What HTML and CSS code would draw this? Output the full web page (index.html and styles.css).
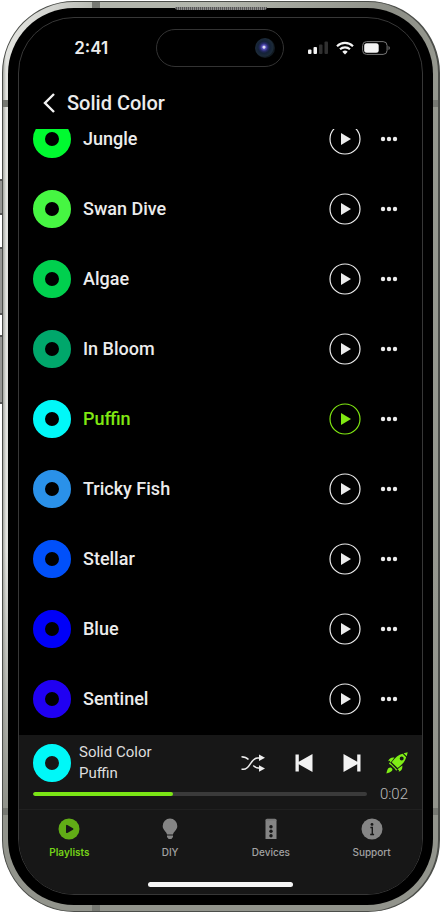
FILE: index.html
```html
<!DOCTYPE html>
<html lang="en">
<head>
<meta charset="utf-8">
<meta name="viewport" content="width=device-width, initial-scale=1">
<title>Solid Color</title>
<link rel="stylesheet" href="styles.css">
</head>
<body>
<svg class="symbols" aria-hidden="true">
  <symbol id="play" viewBox="0 0 32 32"><circle cx="16" cy="16" r="15" fill="none" stroke="currentColor" stroke-width="1.2"/><path d="M12 10v12l10-6z" fill="currentColor"/></symbol>
  <symbol id="dots" viewBox="0 0 18 6"><g fill="currentColor"><circle cx="3" cy="3" r="2.2"/><circle cx="9" cy="3" r="2.2"/><circle cx="15" cy="3" r="2.2"/></g></symbol>
</svg>
<div class="phone">
  <i class="side-key key-action"></i><i class="side-key key-up"></i><i class="side-key key-down"></i>
  <i class="seam seam-top"></i><i class="seam seam-left"></i><i class="seam seam-right"></i>
  <i class="seam seam-low-left"></i><i class="seam seam-low-right"></i><i class="seam seam-bottom"></i>
  <div class="bezel">
    <i class="earpiece"></i>
    <main class="screen">
      <div class="status">
        <span class="clock">2:41</span>
        <span class="island"><i class="lens"></i></span>
        <span class="signals">
          <svg width="20" height="14" viewBox="0 0 20 14"><g fill="#f4f4f4"><rect x="0" y="8.500" width="3.500" height="4.500" rx="1"/><rect x="5.500" y="6" width="3.500" height="7" rx="1"/></g><g fill="#303030"><rect x="11" y="3.500" width="3.500" height="9.500" rx="1"/><rect x="16.500" y="0.500" width="3.500" height="12.500" rx="1"/></g></svg>
          <svg width="18" height="14" viewBox="0 0 18 14" fill="none" stroke="#f4f4f4" stroke-width="2.200"><path d="M1 5.200a11.500 11.500 0 0 1 16 0M4 8.300a7.200 7.200 0 0 1 10 0"/><path d="M6.300 10.700a3.900 3.900 0 0 1 5.400 0L9 13.400z" fill="#f4f4f4" stroke="none"/></svg>
          <svg width="28" height="14" viewBox="0 0 28 14"><rect x="0.600" y="0.600" width="24.500" height="12.800" rx="4" fill="none" stroke="#777"/><rect x="2.200" y="2.200" width="14.500" height="9.600" rx="2.500" fill="#f4f4f4"/><path d="M26.500 5v4q1.300-.5 1.300-2t-1.300-2" fill="#777"/></svg>
        </span>
      </div>
      <header class="title-bar">
        <button class="back" aria-label="Back"><svg width="12" height="20" viewBox="0 0 12 20" fill="none" stroke="#f2f2f2" stroke-width="2.400"><path d="M11 1L2 10l9 9"/></svg></button>
        <h1>Solid Color</h1>
      </header>
      <div class="list-window">
        <ul class="tracks">
          <li><i class="disc jungle"></i><span>Jungle</span><button class="play" aria-label="Play Jungle"><svg><use href="#play"/></svg></button><button class="more" aria-label="More for Jungle"><svg><use href="#dots"/></svg></button></li>
          <li><i class="disc swan"></i><span>Swan Dive</span><button class="play" aria-label="Play Swan Dive"><svg><use href="#play"/></svg></button><button class="more" aria-label="More for Swan Dive"><svg><use href="#dots"/></svg></button></li>
          <li><i class="disc algae"></i><span>Algae</span><button class="play" aria-label="Play Algae"><svg><use href="#play"/></svg></button><button class="more" aria-label="More for Algae"><svg><use href="#dots"/></svg></button></li>
          <li><i class="disc bloom"></i><span>In Bloom</span><button class="play" aria-label="Play In Bloom"><svg><use href="#play"/></svg></button><button class="more" aria-label="More for In Bloom"><svg><use href="#dots"/></svg></button></li>
          <li class="current"><i class="disc puffin"></i><span>Puffin</span><button class="play" aria-label="Play Puffin"><svg><use href="#play"/></svg></button><button class="more" aria-label="More for Puffin"><svg><use href="#dots"/></svg></button></li>
          <li><i class="disc tricky"></i><span>Tricky Fish</span><button class="play" aria-label="Play Tricky Fish"><svg><use href="#play"/></svg></button><button class="more" aria-label="More for Tricky Fish"><svg><use href="#dots"/></svg></button></li>
          <li><i class="disc stellar"></i><span>Stellar</span><button class="play" aria-label="Play Stellar"><svg><use href="#play"/></svg></button><button class="more" aria-label="More for Stellar"><svg><use href="#dots"/></svg></button></li>
          <li><i class="disc blue"></i><span>Blue</span><button class="play" aria-label="Play Blue"><svg><use href="#play"/></svg></button><button class="more" aria-label="More for Blue"><svg><use href="#dots"/></svg></button></li>
          <li><i class="disc sentinel"></i><span>Sentinel</span><button class="play" aria-label="Play Sentinel"><svg><use href="#play"/></svg></button><button class="more" aria-label="More for Sentinel"><svg><use href="#dots"/></svg></button></li>
        </ul>
      </div>
      <section class="player" aria-label="Now playing">
        <div class="now">
          <i class="disc puffin"></i>
          <div class="now-text"><span>Solid Color</span><span>Puffin</span></div>
          <div class="controls">
            <button aria-label="Shuffle"><svg width="24" height="18" viewBox="0 0 24 18"><g fill="none" stroke="#eee" stroke-width="1.500"><path d="M0.500 15.300h2C9.500 15.300 9.500 4 16.500 4H19M0.500 2.700C4 2.700 5.500 3.300 7.500 5.500M12.300 11.500C14 13.500 15.500 14.200 19 14.200"/></g><path d="M18 .5l6 3.300-6 3.200zM18 11.200l6 3.300-6 3.200z" fill="#eee"/></svg></button>
            <button aria-label="Previous"><svg width="18" height="18" viewBox="0 0 18 18" fill="#f2f2f2"><path d="M0.500 0.500h3.300v7.300L17.500 0v18L3.800 10.200v7.300H.5z"/></svg></button>
            <button aria-label="Next"><svg width="18" height="18" viewBox="0 0 18 18" fill="#f2f2f2"><path d="M17.500 0.500h-3.300v7.300L.5 0v18l13.700-7.800v7.300h3.300z"/></svg></button>
            <button aria-label="Boost"><svg width="22" height="22" viewBox="0 0 22 22" fill="#7fee16"><path fill-rule="evenodd" d="M16.600 1.700 20.100 5.200C19.300 9 16.500 12.400 11.600 16L5.700 10.200C9.300 5.100 12.500 2.500 16.600 1.700ZM15.700 4.600a2 2 0 1 0 0 4 2 2 0 0 0 0-4Z"/><path d="M17.600 1.200 21.700.3 20.700 4.300ZM8.400 5.600 6.300 8.500 4.600 10.500 3.700 8.800 2.200 9.200C3.300 6.400 5.200 5.200 8.400 5.600ZM16.300 13.500C16.700 16.700 15.500 18.700 12.700 19.700L13 18.200 11.400 17.200 13.700 15.500ZM3.800 10.200 11.200 17.700 10.200 18.700Q8.700 16.100 6.900 15.100 5.600 13.200 3 11.700ZM4.800 15.500C6.500 16.600 7 17.700 5.800 19 4.500 20.300 2.700 20.700.4 21.500 1 19.400 1.200 17.400 2.600 16.100Q3.600 15.200 4.800 15.500Z"/></svg></button>
          </div>
        </div>
        <div class="timeline"><progress aria-label="Track progress" value="42" max="100"></progress><time>0:02</time></div>
      </section>
      <nav class="tabs">
        <a class="active" href="#playlists"><svg width="22" height="22" viewBox="0 0 22 22"><circle cx="11" cy="11" r="10.500" fill="#61ad16"/><path d="M8.900 7.800v6.400l5.600-3.200z" fill="#171717" stroke="#171717" stroke-width="1.800" stroke-linejoin="round"/></svg><span>Playlists</span></a>
        <a href="#diy"><svg width="22" height="22" viewBox="0 0 22 22" fill="#858585"><path d="M11 .5a7.300 7.300 0 0 0-7.300 7.400c0 4.100 3.500 5 4.300 8.600h6c.8-3.600 4.300-4.500 4.300-8.600A7.300 7.300 0 0 0 11 .5ZM8 17.500h6V19l-1.600 2H9.600L8 19Z"/></svg><span>DIY</span></a>
        <a href="#devices"><svg width="22" height="22" viewBox="0 0 22 22"><path d="M7 .8h8q1.500 0 1.500 1.500V21h-11V2.300Q5.500.8 7 .8" fill="#858585"/><path d="M5.500 1.900h11" stroke="#666" stroke-width=".6"/><g fill="#171717"><circle cx="11" cy="8.700" r="1.700"/><circle cx="11" cy="13.200" r="1.700"/><circle cx="11" cy="17.700" r="1.700"/></g></svg><span>Devices</span></a>
        <a href="#support"><svg width="22" height="22" viewBox="0 0 22 22"><circle cx="11" cy="11" r="10.500" fill="#858585"/><circle cx="11" cy="6.400" r="1.400" fill="#171717"/><path d="M9.400 9.500h1.900v7M9.200 16.500h3.900" fill="none" stroke="#171717" stroke-width="1.400"/></svg><span>Support</span></a>
      </nav>
      <div class="home"><i></i></div>
    </main>
  </div>
</div>
</body>
</html>
```
FILE: styles.css
```css
* { box-sizing: border-box; }
body { margin: 0; padding: 1px 0 0 2px; background: #fff; color: #ececec; font-family: Roboto, sans-serif; }
button { padding: 0; border: 0; background: none; color: inherit; font: inherit; cursor: pointer; }
svg { display: block; }
.symbols { position: absolute; width: 0; height: 0; }
.phone {
  position: relative;
  padding: 6px 5px;
  border: 1px solid #4c4e4a;
  border-right-width: 2px;
  border-radius: 72px;
  background:
    linear-gradient(180deg, transparent 60%, #92948c 88%),
    linear-gradient(90deg, #a5a7a1, #e2e3df 3px, #d2d3cf 50px, #b2b5ac 100px, #b2b5ac 50%, #8d8f87 90%, #96988f);
}
.bezel { position: relative; padding: 9px 10px 10px; border-radius: 66px; background: #000; }
.screen { border: 1px solid #373737; border-radius: 56px; overflow: hidden; background: #000; }
.side-key { position: absolute; left: -3px; width: 2px; border: solid #555; border-width: 2px 0; background: #969694; }
.key-action { top: 177px; height: 36px; }
.key-up { top: 245px; height: 68px; }
.key-down { top: 333px; height: 69px; }
.seam { position: absolute; background: #777973; }
.seam-top { left: 89px; top: 0; width: 8px; height: 6px; }
.seam-bottom { left: 89px; bottom: 0; width: 8px; height: 6px; }
.seam-left { left: 0; top: 98px; width: 5px; height: 7px; }
.seam-right { right: 0; top: 98px; width: 5px; height: 7px; }
.seam-low-left { left: 0; bottom: 96px; width: 5px; height: 7px; }
.seam-low-right { right: 0; bottom: 96px; width: 5px; height: 7px; }
.earpiece { position: absolute; top: -1px; left: 0; right: 0; margin: 0 auto; width: 92px; height: 3px; border-radius: 0 0 4px 4px; background: repeating-linear-gradient(90deg, #8c8c8c 0 1px, #555 1px 2px); }

.status { display: grid; grid-template-columns: 1fr 128px 1fr; align-items: center; height: 59px; padding: 1px 2px 0 0; }
.clock { justify-self: center; padding-left: 8px; font: 600 17px/20px Inter, sans-serif; }
.island { display: flex; align-items: center; justify-content: flex-end; height: 38px; padding-right: 8px; border: 1px solid #333; border-radius: 19px; }
.lens { width: 20px; height: 20px; border-radius: 50%; background: radial-gradient(circle at 45% 46%, #dde 0 1px, #5b52c0 2px, #262a68 4px, #142238 6px, #1c2a38 9px, #111a22 10px); }
.signals { display: flex; align-items: center; justify-content: center; gap: 8px; padding-right: 6px; }

.title-bar { display: flex; align-items: center; gap: 12px; height: 52px; padding: 0 24px; }
h1 { margin: 0; font-size: 20px; line-height: 24px; font-weight: 500; }

.list-window { overflow: hidden; }
.tracks { margin: -25px 0 0; padding: 0 24px 1px 14px; list-style: none; }
.tracks li { display: flex; align-items: center; height: 70px; font-size: 18px; line-height: 24px; font-weight: 500; }
.tracks span { flex: 1; padding-left: 12px; }
.disc { flex: none; width: 38px; height: 38px; border: 12px solid; border-radius: 50%; }
.jungle { border-color: #00fa30; }
.swan { border-color: #46f642; }
.algae { border-color: #00d04e; }
.bloom { border-color: #00a76b; }
.puffin { border-color: #00f8f8; }
.tricky { border-color: #2a91e9; }
.stellar { border-color: #0050fa; }
.blue { border-color: #0000f8; }
.sentinel { border-color: #2000f2; }
.play svg { width: 32px; height: 32px; }
.more { margin-left: 19px; }
.more svg { width: 18px; height: 6px; }
.current span, .current .play { color: #80e812; }

.player { padding: 7px 14px 6px; background: #171717; }
.now { display: flex; align-items: center; }
.now-text { display: flex; flex: 1; flex-direction: column; padding-left: 8px; font-size: 15px; line-height: 21px; color: #dedede; }
.controls { display: flex; align-items: center; }
.controls button + button { margin-left: 30px; }
.controls button:last-child { margin-left: 25px; }
.timeline { display: flex; align-items: center; gap: 13px; padding-top: 1px; }
progress { flex: 1; width: 0; height: 4px; border: 0; border-radius: 2px; overflow: hidden; appearance: none; background: #3a3a3a; }
progress::-webkit-progress-bar { background: #3a3a3a; }
progress::-webkit-progress-value { border-radius: 2px; background: #7be615; }
time { font-size: 15px; line-height: 18px; font-weight: 300; color: #bbb; }

.tabs { display: grid; grid-template-columns: repeat(4, 1fr); padding: 8px 0 21px; border-top: 1px solid #202020; background: #171717; }
.tabs a { display: flex; flex-direction: column; align-items: center; gap: 5px; color: #a2a2a2; font: 500 10px/14px Inter, sans-serif; text-decoration: none; }
.tabs .active { color: #75d218; font-weight: 600; }
.home { padding: 2px 0 7px; background: #171717; }
.home i { display: block; width: 36%; height: 5px; margin: 0 auto; border-radius: 3px; background: #f5f5f5; }
```
